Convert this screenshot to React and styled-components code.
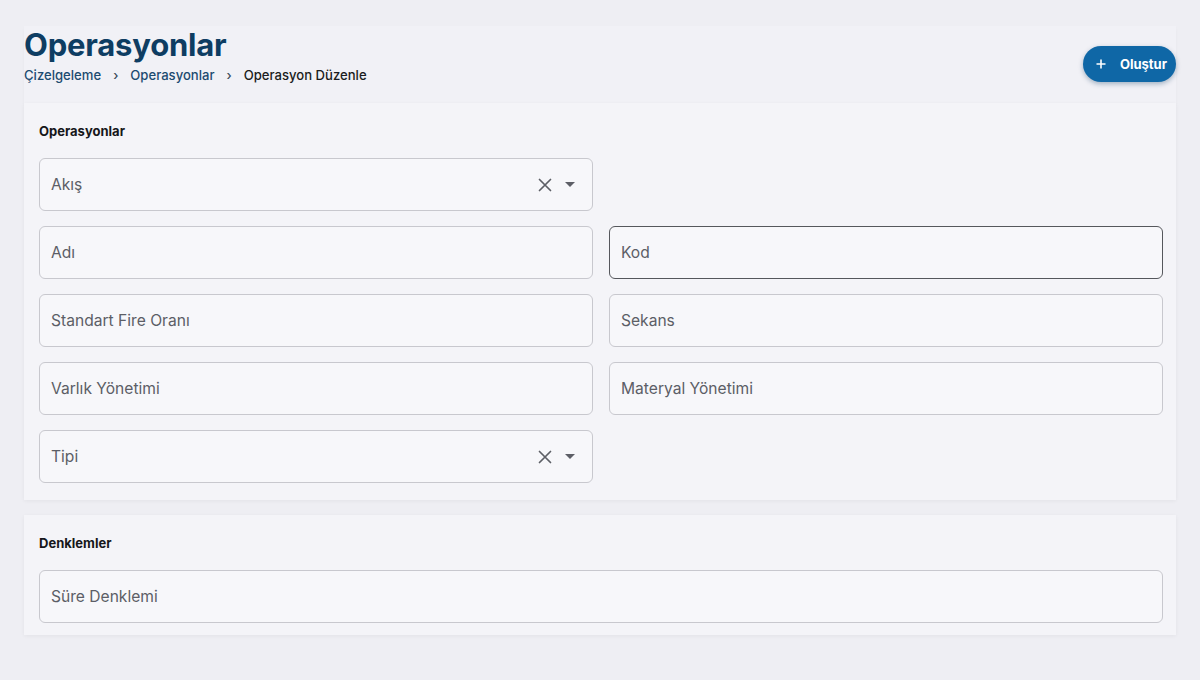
import React from 'react'
import styled, { createGlobalStyle } from 'styled-components'

const GlobalStyle = createGlobalStyle`
  html, body {
    margin: 0;
    padding: 0;
    background: #eeeef3;
    font-family: Inter, "Noto Sans", "Liberation Sans", sans-serif;
  }
  * {
    box-sizing: border-box;
  }
`

const Page = styled.div`
  width: 1200px;
  height: 680px;
  padding: 26px 24px 0 24px;
  overflow: hidden;
`

const Header = styled.div`
  display: flex;
  flex-direction: row;
  justify-content: space-between;
  align-items: flex-start;
  height: 77px;
  background: #f1f1f6;
  box-shadow: 0 2px 3px rgba(0, 0, 0, 0.03);
`

const TitleBlock = styled.div`
  display: flex;
  flex-direction: column;
  padding-top: 2px;
`

const Title = styled.h1`
  margin: 0;
  font-size: 31px;
  line-height: 34px;
  font-weight: 700;
  color: #0e3d62;
  letter-spacing: -0.2px;
`

const Breadcrumbs = styled.div`
  display: flex;
  flex-direction: row;
  align-items: center;
  gap: 12px;
  margin-top: 5px;
  font-size: 13.1px;
  font-weight: 500;
  line-height: 16px;
`

const Crumb = styled.span`
  color: ${(p) => (p.$current ? '#1a1c20' : '#1c4b70')};
`

const Sep = styled.span`
  color: #3a4a5a;
  font-size: 13px;
`

const CreateButton = styled.button`
  display: flex;
  align-items: center;
  gap: 14px;
  margin-top: 20px;
  height: 36px;
  padding: 0 9px 0 13px;
  border: none;
  border-radius: 18px;
  background: #0f67a6;
  color: #ffffff;
  font-family: inherit;
  font-size: 13px;
  font-weight: 700;
  box-shadow: 0 2px 5px rgba(15, 60, 100, 0.35);
`

const Card = styled.section`
  background: #f4f4f8;
  padding: ${(p) => p.$pad};
  box-shadow: 0 1px 4px rgba(0, 0, 0, 0.05);
  margin-bottom: 15px;
`

const CardTitle = styled.h2`
  margin: 0 0 19px 0;
  font-size: 13px;
  line-height: 16px;
  font-weight: 700;
  color: #16171a;
`

const Grid = styled.div`
  display: grid;
  grid-template-columns: 554px 554px;
  column-gap: 16px;
  row-gap: 15px;
`

const Field = styled.div`
  display: flex;
  flex-direction: row;
  align-items: center;
  height: 53px;
  padding: 0 17px 0 11px;
  background: #f7f7fa;
  border: ${(p) => (p.$focused ? '1.5px solid #55575c' : '1px solid #c8c8ce')};
  border-radius: 6px;
  grid-column: ${(p) => (p.$full ? '1 / span 2' : 'auto')};
`

const Placeholder = styled.span`
  flex: 1;
  font-size: 15.6px;
  color: #5c5e66;
`

const Icons = styled.div`
  display: flex;
  align-items: center;
  gap: 13px;
`

const ClearIcon = () => (
  <svg width="14" height="14" viewBox="0 0 14 14">
    <path d="M1.5 1.5 L12.5 12.5 M12.5 1.5 L1.5 12.5" stroke="#5d5f66" strokeWidth="1.7" strokeLinecap="round" />
  </svg>
)

const Caret = () => (
  <svg width="10" height="6" viewBox="0 0 10 6">
    <path d="M0 0 L10 0 L5 5 Z" fill="#5d5f66" />
  </svg>
)

const PlusIcon = () => (
  <svg width="10" height="10" viewBox="0 0 10 10">
    <path d="M5 0.5 V9.5 M0.5 5 H9.5" stroke="#ffffff" strokeWidth="1.6" />
  </svg>
)

function SelectField({ label }) {
  return (
    <Field>
      <Placeholder>{label}</Placeholder>
      <Icons>
        <ClearIcon />
        <Caret />
      </Icons>
    </Field>
  )
}

export default function App() {
  return (
    <>
      <GlobalStyle />
      <Page>
        <Header>
          <TitleBlock>
            <Title>Operasyonlar</Title>
            <Breadcrumbs>
              <Crumb>Çizelgeleme</Crumb>
              <Sep>›</Sep>
              <Crumb>Operasyonlar</Crumb>
              <Sep>›</Sep>
              <Crumb $current>Operasyon Düzenle</Crumb>
            </Breadcrumbs>
          </TitleBlock>
          <CreateButton>
            <PlusIcon />
            Oluştur
          </CreateButton>
        </Header>

        <Card $pad="20px 15px 17px 15px">
          <CardTitle>Operasyonlar</CardTitle>
          <Grid>
            <SelectField label="Akış" />
            <div />
            <Field><Placeholder>Adı</Placeholder></Field>
            <Field $focused><Placeholder>Kod</Placeholder></Field>
            <Field><Placeholder>Standart Fire Oranı</Placeholder></Field>
            <Field><Placeholder>Sekans</Placeholder></Field>
            <Field><Placeholder>Varlık Yönetimi</Placeholder></Field>
            <Field><Placeholder>Materyal Yönetimi</Placeholder></Field>
            <SelectField label="Tipi" />
          </Grid>
        </Card>

        <Card $pad="20px 15px 12px 15px">
          <CardTitle>Denklemler</CardTitle>
          <Grid>
            <Field $full><Placeholder>Süre Denklemi</Placeholder></Field>
          </Grid>
        </Card>
      </Page>
    </>
  )
}
